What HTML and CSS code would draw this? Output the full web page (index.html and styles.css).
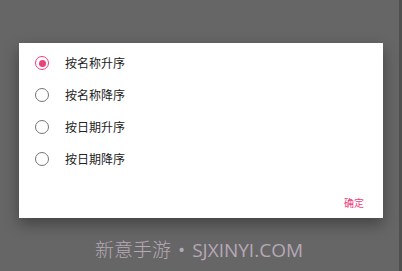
FILE: index.html
```html
<!DOCTYPE html>
<html lang="zh">
<head>
<meta charset="utf-8">
<link rel="stylesheet" href="styles.css">
</head>
<body>
<div class="screen">
  <div class="dialog">
    <div class="options">
      <div class="row"><span class="radio checked"></span><span class="label">按名称升序</span></div>
      <div class="row"><span class="radio"></span><span class="label">按名称降序</span></div>
      <div class="row"><span class="radio"></span><span class="label">按日期升序</span></div>
      <div class="row"><span class="radio"></span><span class="label">按日期降序</span></div>
    </div>
    <div class="actions"><span class="btn">确定</span></div>
  </div>
  <div class="watermark"><span class="cjk">新意手游</span><span class="dot">•</span><span>SJXINYI.COM</span></div>
</div>
</body>
</html>
```
FILE: styles.css
```css
html, body {
  margin: 0;
  padding: 0;
  width: 402px;
  height: 271px;
  overflow: hidden;
  background: #656565;
  font-family: "Noto Sans CJK SC", "Noto Sans", sans-serif;
}
.screen {
  display: flex;
  flex-direction: column;
  width: 399px;
  height: 271px;
  border-right: 3px solid #4f4f4f;
  background: #666666;
}
.dialog {
  margin-top: 43px;
  margin-left: 19px;
  width: 364px;
  height: 175px;
  background: #ffffff;
  box-shadow: 0 6px 14px rgba(0, 0, 0, 0.35);
  display: flex;
  flex-direction: column;
  box-sizing: border-box;
  padding-top: 4px;
}
.options {
  display: flex;
  flex-direction: column;
}
.row {
  height: 32px;
  display: flex;
  align-items: center;
  padding-left: 16px;
}
.radio {
  width: 14px;
  height: 14px;
  box-sizing: border-box;
  border: 1.5px solid #757575;
  border-radius: 50%;
  display: flex;
  align-items: center;
  justify-content: center;
  flex: none;
}
.radio.checked {
  border-color: #ec407a;
}
.radio.checked::after {
  content: "";
  width: 7px;
  height: 7px;
  border-radius: 50%;
  background: #ec407a;
}
.label {
  margin-left: 16px;
  font-size: 12px;
  color: #222222;
  line-height: 16px;
}
.actions {
  display: flex;
  justify-content: flex-end;
  padding-right: 19px;
  margin-top: 21px;
}
.btn {
  font-size: 10px;
  line-height: 14px;
  color: #ec407a;
}
.watermark {
  margin-top: 19px;
  display: flex;
  justify-content: center;
  align-items: baseline;
  font-family: "Open Sans", "Noto Sans CJK SC", sans-serif;
  font-size: 19px;
  line-height: 24px;
  color: #b6a8b6;
  padding-right: 1px;
}
.watermark .cjk {
  font-family: "Noto Sans CJK SC", sans-serif;
  font-weight: 300;
}
.watermark .dot {
  margin: 0 7px;
}
```
